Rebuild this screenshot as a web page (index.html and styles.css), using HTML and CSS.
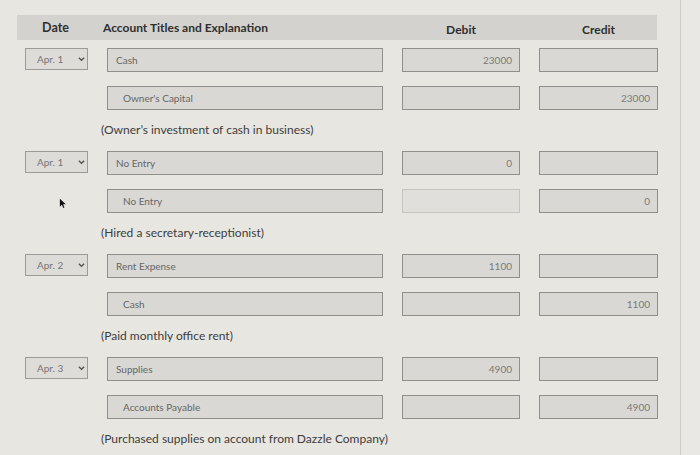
FILE: index.html
```html
<!DOCTYPE html>
<html lang="en">
<head>
<meta charset="utf-8">
<title>Journal entries</title>
<link rel="stylesheet" href="styles.css">
</head>
<body>
<div class="page">
  <main class="sheet">
    <div class="head">
      <span class="h-date">Date</span>
      <span class="h-acct">Account Titles and Explanation</span>
      <span class="h-num">Debit</span>
      <span class="h-num">Credit</span>
    </div>

    <section class="entry">
      <div class="line">
        <div class="date">Apr. 1<svg class="chev" viewBox="0 0 8 6"><path d="M1 1.5 L4 4.5 L7 1.5" /></svg></div>
        <div class="field acct">Cash</div>
        <div class="field num">23000</div>
        <div class="field num"></div>
      </div>
      <div class="line">
        <div></div>
        <div class="field acct cr">Owner's Capital</div>
        <div class="field num"></div>
        <div class="field num">23000</div>
      </div>
      <p class="expl">(Owner’s investment of cash in business)</p>
    </section>

    <section class="entry">
      <div class="line">
        <div class="date">Apr. 1<svg class="chev" viewBox="0 0 8 6"><path d="M1 1.5 L4 4.5 L7 1.5" /></svg></div>
        <div class="field acct">No Entry</div>
        <div class="field num">0</div>
        <div class="field num"></div>
      </div>
      <div class="line">
        <div class="cursor-cell"><svg class="cursor" viewBox="0 0 10 14"><path d="M1 1 L1 11 L3.6 8.6 L5.4 12.6 L6.8 12 L5.1 8.1 L8.5 8.1 Z" /></svg></div>
        <div class="field acct cr">No Entry</div>
        <div class="field num off"></div>
        <div class="field num">0</div>
      </div>
      <p class="expl">(Hired a secretary-receptionist)</p>
    </section>

    <section class="entry">
      <div class="line">
        <div class="date">Apr. 2<svg class="chev" viewBox="0 0 8 6"><path d="M1 1.5 L4 4.5 L7 1.5" /></svg></div>
        <div class="field acct">Rent Expense</div>
        <div class="field num">1100</div>
        <div class="field num"></div>
      </div>
      <div class="line">
        <div></div>
        <div class="field acct cr">Cash</div>
        <div class="field num"></div>
        <div class="field num">1100</div>
      </div>
      <p class="expl">(Paid monthly office rent)</p>
    </section>

    <section class="entry">
      <div class="line">
        <div class="date">Apr. 3<svg class="chev" viewBox="0 0 8 6"><path d="M1 1.5 L4 4.5 L7 1.5" /></svg></div>
        <div class="field acct">Supplies</div>
        <div class="field num">4900</div>
        <div class="field num"></div>
      </div>
      <div class="line">
        <div></div>
        <div class="field acct cr">Accounts Payable</div>
        <div class="field num"></div>
        <div class="field num">4900</div>
      </div>
      <p class="expl">(Purchased supplies on account from Dazzle Company)</p>
    </section>
  </main>
  <aside class="rail"></aside>
</div>
</body>
</html>
```

FILE: styles.css
```css
* { box-sizing: border-box; }

html, body {
  margin: 0;
  padding: 0;
  height: 100%;
  overflow: hidden;
}

body {
  background: #e8e6e1;
  font-family: Lato, "Open Sans", "Liberation Sans", sans-serif;
  color: #3a3a3a;
}

.page {
  display: flex;
  height: 455px;
}

.sheet {
  width: 680px;
  padding: 15px 0 0 25px;
  background: #e8e6e1;
}

.rail {
  flex: 1;
  border-left: 1px solid #cfcdc8;
  background: #eae8e4;
}

.head {
  display: grid;
  grid-template-columns: 63px 276px 118px 119px;
  column-gap: 19px;
  align-items: center;
  width: 640px;
  height: 25px;
  margin-left: -8px;
  padding-left: 8px;
  background: #d3d2ce;
  font-weight: 700;
  font-size: 12px;
  color: #2f2f2f;
}

.h-date { text-align: center; padding-right: 2px; font-size: 12.5px; }
.h-acct { margin-left: -4px; }
.h-num { text-align: center; padding-top: 3px; }

.entry {
  padding-top: 8px;
}

.entry + .entry {
  padding-top: 0;
}

.line {
  display: grid;
  grid-template-columns: 63px 276px 118px 119px;
  column-gap: 19px;
  height: 24px;
  margin-bottom: 14px;
}

.line + .line { margin-bottom: 0; }

.date {
  display: flex;
  align-items: center;
  justify-content: space-between;
  height: 22px;
  padding: 0 2px 0 11px;
  background: #dddcd8;
  border: 1px solid #9c9b98;
  font-size: 10px;
  color: #767676;
}

.chev {
  width: 7px;
  height: 6px;
  fill: none;
  stroke: #555;
  stroke-width: 1.6;
}

.field {
  display: flex;
  align-items: center;
  height: 24px;
  background: #d9d8d4;
  border: 1px solid #8f8f8b;
  font-size: 10px;
  color: #666;
}

.acct { padding-left: 8px; }
.acct.cr { padding-left: 15px; }

.num {
  justify-content: flex-end;
  padding-right: 7px;
  color: #7a7a7a;
}

.num.off {
  background: #e0dfdb;
  border-color: #c4c3bf;
}

.cursor-cell {
  display: flex;
  align-items: center;
  justify-content: center;
  padding-left: 12px;
  padding-top: 4px;
}

.cursor {
  width: 8px;
  height: 11px;
  fill: #111;
}

.expl {
  margin: 12px 0 13px 76px;
  height: 16px;
  line-height: 16px;
  font-size: 12px;
  color: #3d3d3d;
}
```
